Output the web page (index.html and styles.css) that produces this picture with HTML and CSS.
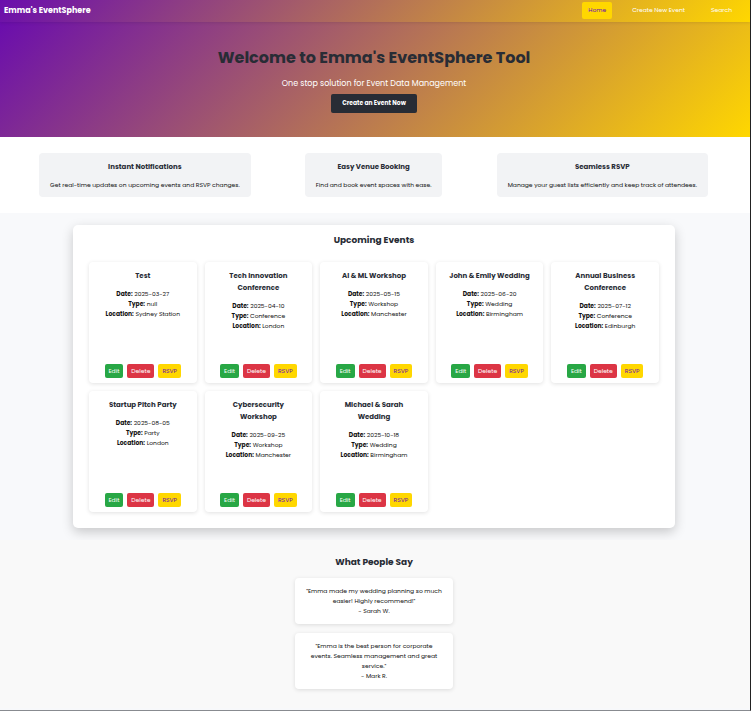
FILE: index.html
```html
<!DOCTYPE html>
<html lang="en">
<head>
<meta charset="utf-8">
<meta name="viewport" content="width=device-width, initial-scale=1">
<title>Emma's EventSphere</title>
<link rel="stylesheet" href="styles.css">
</head>
<body>
<nav class="navbar">
  <a class="brand" href="#">Emma's EventSphere</a>
  <div class="nav-links">
    <a class="nav-link active" href="#">Home</a>
    <a class="nav-link" href="#">Create New Event</a>
    <a class="nav-link" href="#">Search</a>
  </div>
</nav>
<header class="hero">
  <h1>Welcome to Emma's EventSphere Tool</h1>
  <p>One stop solution for Event Data Management</p>
  <button class="cta" type="button">Create an Event Now</button>
</header>
<section class="features">
  <article class="feature"><h3>Instant Notifications</h3><p>Get real-time updates on upcoming events and RSVP changes.</p></article>
  <article class="feature"><h3>Easy Venue Booking</h3><p>Find and book event spaces with ease.</p></article>
  <article class="feature"><h3>Seamless RSVP</h3><p>Manage your guest lists efficiently and keep track of attendees.</p></article>
</section>
<main class="events">
  <h2>Upcoming Events</h2>
  <div class="event-grid">
    <article class="event"><h3>Test</h3><p><strong>Date:</strong> 2025-03-27</p><p><strong>Type:</strong> null</p><p><strong>Location:</strong> Sydney Station</p><div class="actions"><button class="btn edit" type="button">Edit</button><button class="btn delete" type="button">Delete</button><button class="btn rsvp" type="button">RSVP</button></div></article>
    <article class="event"><h3>Tech Innovation Conference</h3><p><strong>Date:</strong> 2025-04-10</p><p><strong>Type:</strong> Conference</p><p><strong>Location:</strong> London</p><div class="actions"><button class="btn edit" type="button">Edit</button><button class="btn delete" type="button">Delete</button><button class="btn rsvp" type="button">RSVP</button></div></article>
    <article class="event"><h3>AI &amp; ML Workshop</h3><p><strong>Date:</strong> 2025-05-15</p><p><strong>Type:</strong> Workshop</p><p><strong>Location:</strong> Manchester</p><div class="actions"><button class="btn edit" type="button">Edit</button><button class="btn delete" type="button">Delete</button><button class="btn rsvp" type="button">RSVP</button></div></article>
    <article class="event"><h3>John &amp; Emily Wedding</h3><p><strong>Date:</strong> 2025-06-20</p><p><strong>Type:</strong> Wedding</p><p><strong>Location:</strong> Birmingham</p><div class="actions"><button class="btn edit" type="button">Edit</button><button class="btn delete" type="button">Delete</button><button class="btn rsvp" type="button">RSVP</button></div></article>
    <article class="event"><h3>Annual Business Conference</h3><p><strong>Date:</strong> 2025-07-12</p><p><strong>Type:</strong> Conference</p><p><strong>Location:</strong> Edinburgh</p><div class="actions"><button class="btn edit" type="button">Edit</button><button class="btn delete" type="button">Delete</button><button class="btn rsvp" type="button">RSVP</button></div></article>
    <article class="event"><h3>Startup Pitch Party</h3><p><strong>Date:</strong> 2025-08-05</p><p><strong>Type:</strong> Party</p><p><strong>Location:</strong> London</p><div class="actions"><button class="btn edit" type="button">Edit</button><button class="btn delete" type="button">Delete</button><button class="btn rsvp" type="button">RSVP</button></div></article>
    <article class="event"><h3>Cybersecurity Workshop</h3><p><strong>Date:</strong> 2025-09-25</p><p><strong>Type:</strong> Workshop</p><p><strong>Location:</strong> Manchester</p><div class="actions"><button class="btn edit" type="button">Edit</button><button class="btn delete" type="button">Delete</button><button class="btn rsvp" type="button">RSVP</button></div></article>
    <article class="event"><h3>Michael &amp; Sarah Wedding</h3><p><strong>Date:</strong> 2025-10-18</p><p><strong>Type:</strong> Wedding</p><p><strong>Location:</strong> Birmingham</p><div class="actions"><button class="btn edit" type="button">Edit</button><button class="btn delete" type="button">Delete</button><button class="btn rsvp" type="button">RSVP</button></div></article>
  </div>
</main>
<section class="testimonials">
  <h2>What People Say</h2>
  <blockquote class="quote"><p>"Emma made my wedding planning so much easier! Highly recommend!"</p><footer>- Sarah W.</footer></blockquote>
  <blockquote class="quote"><p>"Emma is the best person for corporate events. Seamless management and great service."</p><footer>- Mark R.</footer></blockquote>
</section>
</body>
</html>
```
FILE: styles.css
```css
:root {
  --purple: #6a0dad;
  --gold: #ffd700;
  --ink: #282c35;
}

* {
  box-sizing: border-box;
  margin: 0;
}

body {
  min-height: 100vh;
  border-right: 1px solid #222;
  border-bottom: 1px solid #888b90;
  background: #f8f9fb;
  color: #111;
  font: 6px/10px Poppins, Inter, sans-serif;
  text-align: center;
}

h1, h2, h3 {
  color: var(--ink);
  font-weight: 700;
}

h2 {
  font-size: 9px;
  line-height: 14px;
}

h3 {
  font-size: 7px;
  line-height: 12px;
}

a {
  color: #fff;
  text-decoration: none;
}

button {
  border: 0;
  font-family: inherit;
  cursor: pointer;
}

.navbar {
  position: relative;
  display: flex;
  align-items: center;
  justify-content: space-between;
  padding: 2px 12px 3px 4px;
  background: linear-gradient(135deg, var(--purple), var(--gold));
  box-shadow: 0 1px 3px rgba(0, 0, 0, 0.1);
}

.brand {
  font-size: 8px;
  font-weight: 700;
}

.nav-links {
  display: flex;
  gap: 14px;
}

.nav-link {
  padding: 3px 6px;
  border-radius: 2px;
  line-height: 11px;
}

.nav-link.active {
  background: var(--gold);
  color: var(--purple);
}

.hero {
  padding: 25px 18px 24px 16px;
  background: linear-gradient(135deg, var(--purple), var(--gold));
  color: #fff;
}

.hero h1 {
  margin-bottom: 9px;
  font-size: 16px;
  line-height: 22px;
}

.hero p {
  margin-bottom: 4px;
  font-size: 8px;
  line-height: 12px;
}

.cta {
  padding: 4px 11px;
  border-radius: 2px;
  background: var(--ink);
  color: #fff;
  font-size: 6px;
  font-weight: 700;
  line-height: 11px;
}

.features {
  display: flex;
  justify-content: space-around;
  padding: 16px 15px 16px 12px;
  background: #fff;
}

.feature {
  padding: 8px 11px 7px;
  border-radius: 4px;
  background: #f2f3f5;
}

.feature h3 {
  margin-bottom: 7px;
}

.events {
  width: calc(80% + 2px);
  margin: 12px 10% 12px auto;
  padding: 8px 16px 16px;
  border-radius: 5px;
  background: #fff;
  box-shadow: 0 4px 12px rgba(0, 0, 0, 0.2);
}

.events h2 {
  margin-bottom: 15px;
}

.event-grid {
  display: grid;
  grid-template-columns: repeat(5, 1fr);
  grid-auto-rows: 121px;
  gap: 8px;
}

.event {
  display: flex;
  flex-direction: column;
  padding: 8px 10px 5px;
  border-radius: 4px;
  background: #fff;
  box-shadow: 0 1px 4px rgba(0, 0, 0, 0.12);
}

.event h3 {
  margin-bottom: 7px;
}

.actions {
  display: flex;
  justify-content: center;
  gap: 4px;
  margin-top: auto;
}

.btn {
  padding: 2px 4px;
  border-radius: 2px;
  color: #fff;
  font-size: 6px;
  line-height: 10px;
}

.edit {
  background: #28a745;
}

.delete {
  background: #dc3545;
}

.rsvp {
  background: var(--gold);
  color: var(--purple);
}

.testimonials {
  display: flex;
  flex-direction: column;
  align-items: center;
  gap: 9px;
  padding: 15px 18px 19px 16px;
  background: #f9f9f9;
}

.quote {
  width: 21%;
  min-width: 158px;
  padding: 8px 10px;
  border-radius: 4px;
  background: #fff;
  box-shadow: 0 1px 4px rgba(0, 0, 0, 0.12);
}
```
